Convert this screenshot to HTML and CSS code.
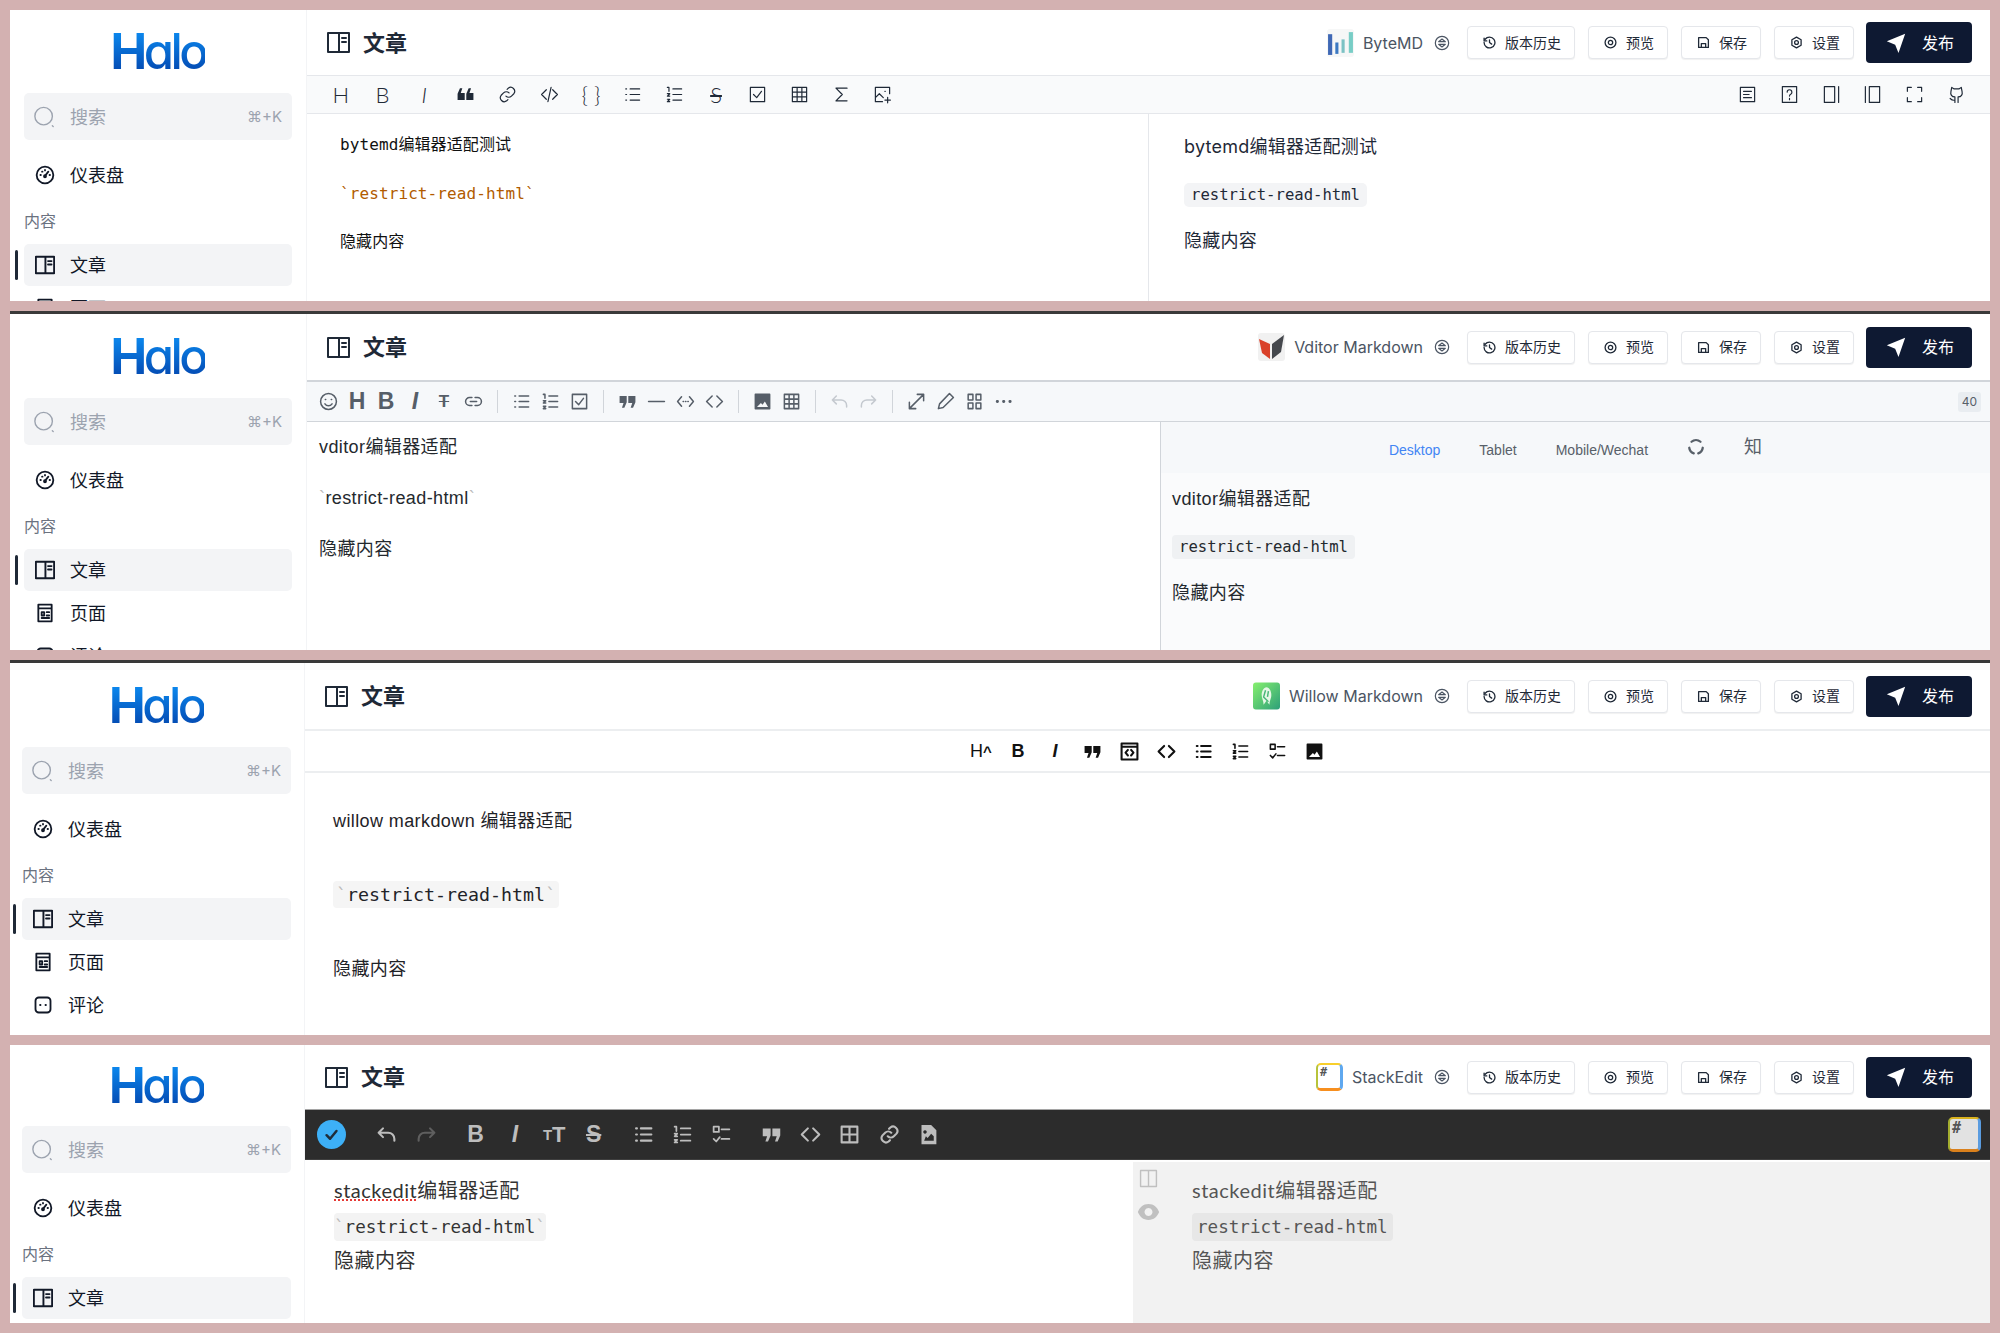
FILE: index.html
```html
<!DOCTYPE html>
<html lang="zh-CN">
<head>
    <meta charset="UTF-8">
    <title>Halo 编辑器适配</title>
    <link rel="stylesheet" href="styles.css">
</head>
<body>

<!-- icon sprite -->
<svg class="sprite" xmlns="http://www.w3.org/2000/svg">
    <symbol id="i-book" viewBox="0 0 23 21"><path d="M1 1h21v19H1zM12 1v19M15 6h4M15 10h4"/></symbol>
    <symbol id="i-dash" viewBox="0 0 24 24"><circle cx="12" cy="12" r="10"/><path d="M12 13l4-5M6.500 12h.5M8.500 8h.5M12 6v.5M17.500 12h.5"/><circle cx="12" cy="13.500" r="1.200"/></symbol>
    <symbol id="i-search" viewBox="0 0 24 24"><circle cx="11" cy="11" r="10"/><path d="M21 22l1 1"/></symbol>
    <symbol id="i-page" viewBox="0 0 24 24"><path d="M4 2h16v20H4zM4 6.500h16M8 11h3v4H8zM14 11h3M8 18h9M14 15h3"/></symbol>
    <symbol id="i-comment" viewBox="0 0 24 24"><path d="M7 3h10a4 4 0 0 1 4 4v10a4 4 0 0 1-4 4H7a4 4 0 0 1-4-4V7a4 4 0 0 1 4-4z"/><path d="M8.500 12h.5M15 12h.5"/></symbol>
    <symbol id="i-swap" viewBox="0 0 24 24"><circle cx="12" cy="12" r="10"/><path d="M7 10h10l-5-4zM7 14h10l-5 4z"/></symbol>
    <symbol id="i-history" viewBox="0 0 24 24"><path d="M4 6a10 10 0 1 1-2 6M2 4v5h5M12 7v5l4 3"/></symbol>
    <symbol id="i-eye" viewBox="0 0 24 24"><circle cx="12" cy="12" r="10"/><circle cx="12" cy="12" r="4"/></symbol>
    <symbol id="i-save" viewBox="0 0 24 24"><path d="M3 3h14l4 4v14H3zM8 21v-7h8v7"/></symbol>
    <symbol id="i-gear" viewBox="0 0 24 24"><path d="M12 2l8.500 5v10L12 22l-8.500-5V7z"/><circle cx="12" cy="12" r="3.500"/></symbol>
    <symbol id="i-send" viewBox="0 0 24 24"><path class="solid" d="M1 10L23 1 15 24l-4-10z"/></symbol>

    <symbol id="t-ul" viewBox="0 0 24 24"><path d="M9 5h12M9 12h12M9 19h12M3.500 5h1M3.500 12h1M3.500 19h1"/></symbol>
    <symbol id="t-ol" viewBox="0 0 24 24"><path d="M10 5h11M10 12h11M10 19h11M3 3h2v5M3 11h3l-3 3h3M3 18h3l-2 1.500 2 1.500H3"/></symbol>
    <symbol id="t-task" viewBox="0 0 24 24"><path d="M3 3h6v6H3zM12 6h9M3 17l3 3 4-5M12 17h9"/></symbol>
    <symbol id="t-check" viewBox="0 0 24 24"><path d="M3 3h18v18H3zM7 12l4 4 6-8"/></symbol>
    <symbol id="t-check-mark" viewBox="0 0 24 24"><path d="M5 13l5 5 9-11"/></symbol>
    <symbol id="t-quote" viewBox="0 0 24 24"><path class="solid" d="M2 5h9v8l-3 7H5l2-6H2zM13 5h9v8l-3 7h-3l2-6h-5z"/></symbol>
    <symbol id="t-code" viewBox="0 0 24 24"><path d="M9 5l-7 7 7 7M15 5l7 7-7 7"/></symbol>
    <symbol id="t-codeslash" viewBox="0 0 24 24"><path d="M8 6l-6 6 6 6M16 6l6 6-6 6M14 3l-4 18"/></symbol>
    <symbol id="t-inline" viewBox="0 0 24 24"><path d="M7 6l-5 6 5 6M17 6l5 6-5 6M9 12h.5M12 12h.5M15 12h.5"/></symbol>
    <symbol id="t-block" viewBox="0 0 24 24"><path d="M2 2h20v20H2zM2 6h20"/><path d="M10 10l-3 3.500 3 3.500M14 10l3 3.500-3 3.500"/></symbol>
    <symbol id="t-table" viewBox="0 0 24 24"><path d="M3 3h18v18H3zM3 9h18M3 15h18M9 3v18M15 3v18"/></symbol>
    <symbol id="t-table2" viewBox="0 0 24 24"><path d="M3 3h18v18H3zM3 12h18M12 3v18"/></symbol>
    <symbol id="t-link" viewBox="0 0 24 24"><path d="M10 14a5 5 0 0 0 7 0l3-3a5 5 0 0 0-7-7l-1.500 1.500M14 10a5 5 0 0 0-7 0l-3 3a5 5 0 0 0 7 7l1.500-1.500"/></symbol>
    <symbol id="t-linkh" viewBox="0 0 24 24"><path d="M10 7H7a5 5 0 0 0 0 10h3M14 7h3a5 5 0 0 1 0 10h-3M8 12h8"/></symbol>
    <symbol id="t-image" viewBox="0 0 24 24"><path class="solid" fill-rule="evenodd" d="M3 2h18a1 1 0 0 1 1 1v18a1 1 0 0 1-1 1H3a1 1 0 0 1-1-1V3a1 1 0 0 1 1-1zM5 19h14l-4-7-3 4-2-2z"/></symbol>
    <symbol id="t-imgadd" viewBox="0 0 24 24"><path d="M21 11V3H3v18h9M3 16l5-5 5 5M15 19h7M18.500 15.500v7M15 8h.5"/></symbol>
    <symbol id="t-imgfile" viewBox="0 0 24 24"><path class="solid" fill-rule="evenodd" d="M4 1h11l6 6v16H4zM7 19h11v-5l-3-3-4 5-2-2zM8 7a2 2 0 1 0 .01 0z"/></symbol>
    <symbol id="t-undo" viewBox="0 0 24 24"><path d="M8 5l-5 5 5 5M3 10h11a7 7 0 0 1 7 7v2"/></symbol>
    <symbol id="t-sigma" viewBox="0 0 24 24"><path d="M19 4H5l8 8-8 8h14"/></symbol>
    <symbol id="t-smile" viewBox="0 0 24 24"><circle cx="12" cy="12" r="10"/><path d="M8 9.500h.5M15.500 9.500h.5M7.500 15a5.500 5.500 0 0 0 9 0"/></symbol>
    <symbol id="t-hr" viewBox="0 0 24 24"><path d="M2 12h20"/></symbol>
    <symbol id="t-expand" viewBox="0 0 24 24"><path d="M3 21L21 3M13 3h8v8M3 13v8h8"/></symbol>
    <symbol id="t-pencil" viewBox="0 0 24 24"><path d="M3 21l1.500-6L17 2l5 5L9 19.500z"/></symbol>
    <symbol id="t-both" viewBox="0 0 24 24"><path d="M4 3h6v7H4zM14 3h6v7h-6zM4 14h6v7H4zM14 14h6v7h-6z"/></symbol>
    <symbol id="t-more" viewBox="0 0 24 24"><path d="M4 12h.5M12 12h.5M20 12h.5"/></symbol>
    <symbol id="t-toc" viewBox="0 0 24 24"><path d="M3 3h18v18H3zM7 8h10M7 12h7M7 16h10"/></symbol>
    <symbol id="t-help" viewBox="0 0 24 24"><path d="M3 2h18v20H3zM9 9a3 3 0 1 1 4.500 2.600c-1 .6-1.500 1.200-1.500 2.400M12 17v1.500"/></symbol>
    <symbol id="t-panelr" viewBox="0 0 24 24"><path d="M3 2h13v20H3zM21 2v20"/></symbol>
    <symbol id="t-panell" viewBox="0 0 24 24"><path d="M8 2h13v20H8zM3 2v20"/></symbol>
    <symbol id="t-full" viewBox="0 0 24 24"><path d="M3 8V3h5M16 3h5v5M21 16v5h-5M8 21H3v-5"/></symbol>
    <symbol id="t-github" viewBox="0 0 24 24"><path d="M6 3l3 2h6l3-2 1 5c1 4-1 7-5 7v7M6 3L5 8c-1 4 1 7 5 7v7M10 19c-3 1-4 0-6-2"/></symbol>
    <symbol id="t-columns" viewBox="0 0 24 24"><path d="M2 2h20v20H2zM12 2v20"/></symbol>
    <symbol id="t-eyeball" viewBox="0 0 24 18"><path class="solid" fill-rule="evenodd" d="M12 0c6 0 10 4 12 9-2 5-6 9-12 9S2 14 0 9c2-5 6-9 12-9zM12 4.500a4.500 4.500 0 1 0 .01 0z"/></symbol>
    <symbol id="t-reload" viewBox="0 0 24 24"><path d="M6 5a9 9 0 0 1 12 0M21 13a9 9 0 0 1-6 7.500M9 20.500A9 9 0 0 1 3 13"/></symbol>

    <symbol id="l-bytemd" viewBox="0 0 26 27"><rect width="26" height="27" rx="3" fill="#f6f7f7"/><rect x="1" y="5" width="4" height="20" fill="#3f68b5"/><rect x="8" y="13" width="3" height="11" fill="#3c79c2"/><rect x="14" y="10" width="3" height="13" fill="#7cc2c4"/><rect x="21" y="3" width="4" height="20" fill="#78cdc6"/></symbol>
    <symbol id="l-vditor" viewBox="0 0 27 28"><rect width="27" height="28" rx="3" fill="#f1f1f1"/><path d="M1 6l11 5v15L4 20z" fill="#d9412a"/><path d="M26 2L14 11v15l9-7z" fill="#45484d"/></symbol>
    <symbol id="l-willow" viewBox="0 0 28 28"><rect width="28" height="28" rx="3" fill="url(#willow-bg)"/><path d="M14 5c3 0 5 4 5 8s-2 6-2 10l-3-4-3 4c0-4-2-6-2-10s2-8 5-8z" fill="#e6f7e6"/><path d="M13 8l-2 7 5 5M16 9l-1 6" fill="none" stroke="#49b878" stroke-width="1.500"/></symbol>
    <defs><linearGradient id="willow-bg" x1="0" y1="0" x2="1" y2="1"><stop offset="0" stop-color="#86f06e"/><stop offset="1" stop-color="#2d9f79"/></linearGradient></defs>
</svg>

<main class="sheet">

    <!-- ByteMD -->
    <section class="panel panel-bytemd">
        <aside class="sidebar">
            <div class="logo"><span class="logo-text"><b>H</b>alo</span></div>
            <div class="search"><svg class="ic search-ic"><use href="#i-search"/></svg><span class="search-text">搜索</span><span class="search-key">⌘+K</span></div>
            <div class="nav-item nav-first"><svg class="ic"><use href="#i-dash"/></svg>仪表盘</div>
            <div class="nav-label">内容</div>
            <div class="nav-item active"><svg class="ic"><use href="#i-book"/></svg>文章</div>
            <div class="nav-item"><svg class="ic"><use href="#i-page"/></svg>页面</div>
            <div class="nav-item"><svg class="ic"><use href="#i-comment"/></svg>评论</div>
        </aside>
        <div class="main">
            <header class="head">
                <div class="title"><svg class="ic title-ic"><use href="#i-book"/></svg>文章</div>
                <div class="actions">
                    <div class="editor-name"><svg class="editor-logo"><use href="#l-bytemd"/></svg><span>ByteMD</span><svg class="ic swap"><use href="#i-swap"/></svg></div>
                    <button class="btn"><svg class="ic"><use href="#i-history"/></svg>版本历史</button>
                    <button class="btn"><svg class="ic"><use href="#i-eye"/></svg>预览</button>
                    <button class="btn"><svg class="ic"><use href="#i-save"/></svg>保存</button>
                    <button class="btn"><svg class="ic"><use href="#i-gear"/></svg>设置</button>
                    <button class="btn-publish"><svg class="ic"><use href="#i-send"/></svg>发布</button>
                </div>
            </header>
            <div class="tb tb-bytemd">
                <span class="tool letter">H</span>
                <span class="tool letter">B</span>
                <span class="tool letter ital">I</span>
                <span class="tool flip"><svg class="ic"><use href="#t-quote"/></svg></span>
                <span class="tool"><svg class="ic"><use href="#t-link"/></svg></span>
                <span class="tool"><svg class="ic"><use href="#t-codeslash"/></svg></span>
                <span class="tool letter">{ }</span>
                <span class="tool"><svg class="ic"><use href="#t-ul"/></svg></span>
                <span class="tool"><svg class="ic"><use href="#t-ol"/></svg></span>
                <span class="tool letter strike">S</span>
                <span class="tool"><svg class="ic"><use href="#t-check"/></svg></span>
                <span class="tool"><svg class="ic"><use href="#t-table"/></svg></span>
                <span class="tool"><svg class="ic"><use href="#t-sigma"/></svg></span>
                <span class="tool"><svg class="ic"><use href="#t-imgadd"/></svg></span>
                <span class="tb-right">
                    <span class="tool"><svg class="ic"><use href="#t-toc"/></svg></span>
                    <span class="tool"><svg class="ic"><use href="#t-help"/></svg></span>
                    <span class="tool"><svg class="ic"><use href="#t-panelr"/></svg></span>
                    <span class="tool"><svg class="ic"><use href="#t-panell"/></svg></span>
                    <span class="tool"><svg class="ic"><use href="#t-full"/></svg></span>
                    <span class="tool"><svg class="ic"><use href="#t-github"/></svg></span>
                </span>
            </div>
            <div class="split split-bytemd">
                <div class="src">
                    <p>bytemd编辑器适配测试</p>
                    <p class="orange">`restrict-read-html`</p>
                    <p>隐藏内容</p>
                </div>
                <div class="pre">
                    <p>bytemd编辑器适配测试</p>
                    <p><code>restrict-read-html</code></p>
                    <p>隐藏内容</p>
                </div>
            </div>
        </div>
    </section>

    <!-- Vditor -->
    <section class="panel panel-vditor has-bar">
        <aside class="sidebar">
            <div class="logo"><span class="logo-text"><b>H</b>alo</span></div>
            <div class="search"><svg class="ic search-ic"><use href="#i-search"/></svg><span class="search-text">搜索</span><span class="search-key">⌘+K</span></div>
            <div class="nav-item nav-first"><svg class="ic"><use href="#i-dash"/></svg>仪表盘</div>
            <div class="nav-label">内容</div>
            <div class="nav-item active"><svg class="ic"><use href="#i-book"/></svg>文章</div>
            <div class="nav-item"><svg class="ic"><use href="#i-page"/></svg>页面</div>
            <div class="nav-item"><svg class="ic"><use href="#i-comment"/></svg>评论</div>
        </aside>
        <div class="main">
            <header class="head">
                <div class="title"><svg class="ic title-ic"><use href="#i-book"/></svg>文章</div>
                <div class="actions">
                    <div class="editor-name"><svg class="editor-logo"><use href="#l-vditor"/></svg><span>Vditor Markdown</span><svg class="ic swap"><use href="#i-swap"/></svg></div>
                    <button class="btn"><svg class="ic"><use href="#i-history"/></svg>版本历史</button>
                    <button class="btn"><svg class="ic"><use href="#i-eye"/></svg>预览</button>
                    <button class="btn"><svg class="ic"><use href="#i-save"/></svg>保存</button>
                    <button class="btn"><svg class="ic"><use href="#i-gear"/></svg>设置</button>
                    <button class="btn-publish"><svg class="ic"><use href="#i-send"/></svg>发布</button>
                </div>
            </header>
            <div class="tb tb-vditor">
                <span class="tool"><svg class="ic"><use href="#t-smile"/></svg></span>
                <span class="tool letter">H</span>
                <span class="tool letter">B</span>
                <span class="tool letter ital">I</span>
                <span class="tool letter strike">T</span>
                <span class="tool"><svg class="ic"><use href="#t-linkh"/></svg></span>
                <i class="sep"></i>
                <span class="tool"><svg class="ic"><use href="#t-ul"/></svg></span>
                <span class="tool"><svg class="ic"><use href="#t-ol"/></svg></span>
                <span class="tool"><svg class="ic"><use href="#t-check"/></svg></span>
                <i class="sep"></i>
                <span class="tool"><svg class="ic"><use href="#t-quote"/></svg></span>
                <span class="tool"><svg class="ic"><use href="#t-hr"/></svg></span>
                <span class="tool"><svg class="ic"><use href="#t-inline"/></svg></span>
                <span class="tool"><svg class="ic"><use href="#t-code"/></svg></span>
                <i class="sep"></i>
                <span class="tool"><svg class="ic"><use href="#t-image"/></svg></span>
                <span class="tool"><svg class="ic"><use href="#t-table"/></svg></span>
                <i class="sep"></i>
                <span class="tool off"><svg class="ic"><use href="#t-undo"/></svg></span>
                <span class="tool off mirror"><svg class="ic"><use href="#t-undo"/></svg></span>
                <i class="sep"></i>
                <span class="tool"><svg class="ic"><use href="#t-expand"/></svg></span>
                <span class="tool"><svg class="ic"><use href="#t-pencil"/></svg></span>
                <span class="tool"><svg class="ic"><use href="#t-both"/></svg></span>
                <span class="tool"><svg class="ic ic-more"><use href="#t-more"/></svg></span>
                <span class="counter">40</span>
            </div>
            <div class="split split-vditor">
                <div class="src">
                    <p>vditor编辑器适配</p>
                    <p><em>`</em>restrict-read-html<em>`</em></p>
                    <p>隐藏内容</p>
                </div>
                <div class="pre">
                    <div class="tabs">
                        <span class="tab tab-on">Desktop</span>
                        <span class="tab">Tablet</span>
                        <span class="tab">Mobile/Wechat</span>
                        <svg class="ic tab-ic"><use href="#t-reload"/></svg>
                        <span class="tab-zhi">知</span>
                    </div>
                    <div class="pre-body">
                        <p>vditor编辑器适配</p>
                        <p><code>restrict-read-html</code></p>
                        <p>隐藏内容</p>
                    </div>
                </div>
            </div>
        </div>
    </section>

    <!-- Willow -->
    <section class="panel panel-willow has-bar narrow">
        <aside class="sidebar">
            <div class="logo"><span class="logo-text"><b>H</b>alo</span></div>
            <div class="search"><svg class="ic search-ic"><use href="#i-search"/></svg><span class="search-text">搜索</span><span class="search-key">⌘+K</span></div>
            <div class="nav-item nav-first"><svg class="ic"><use href="#i-dash"/></svg>仪表盘</div>
            <div class="nav-label">内容</div>
            <div class="nav-item active"><svg class="ic"><use href="#i-book"/></svg>文章</div>
            <div class="nav-item"><svg class="ic"><use href="#i-page"/></svg>页面</div>
            <div class="nav-item"><svg class="ic"><use href="#i-comment"/></svg>评论</div>
        </aside>
        <div class="main">
            <header class="head">
                <div class="title"><svg class="ic title-ic"><use href="#i-book"/></svg>文章</div>
                <div class="actions">
                    <div class="editor-name"><svg class="editor-logo"><use href="#l-willow"/></svg><span>Willow Markdown</span><svg class="ic swap"><use href="#i-swap"/></svg></div>
                    <button class="btn"><svg class="ic"><use href="#i-history"/></svg>版本历史</button>
                    <button class="btn"><svg class="ic"><use href="#i-eye"/></svg>预览</button>
                    <button class="btn"><svg class="ic"><use href="#i-save"/></svg>保存</button>
                    <button class="btn"><svg class="ic"><use href="#i-gear"/></svg>设置</button>
                    <button class="btn-publish"><svg class="ic"><use href="#i-send"/></svg>发布</button>
                </div>
            </header>
            <div class="tb tb-willow">
                <span class="tool letter heading">H<b>^</b></span>
                <span class="tool letter">B</span>
                <span class="tool letter ital">I</span>
                <span class="tool"><svg class="ic"><use href="#t-quote"/></svg></span>
                <span class="tool"><svg class="ic"><use href="#t-block"/></svg></span>
                <span class="tool"><svg class="ic"><use href="#t-code"/></svg></span>
                <span class="tool"><svg class="ic"><use href="#t-ul"/></svg></span>
                <span class="tool"><svg class="ic thin"><use href="#t-ol"/></svg></span>
                <span class="tool"><svg class="ic thin"><use href="#t-task"/></svg></span>
                <span class="tool"><svg class="ic"><use href="#t-image"/></svg></span>
            </div>
            <div class="doc-willow">
                <p>willow markdown 编辑器适配</p>
                <p><code><em>`</em>restrict-read-html<em>`</em></code></p>
                <p>隐藏内容</p>
            </div>
        </div>
    </section>

    <!-- StackEdit -->
    <section class="panel panel-stackedit narrow">
        <aside class="sidebar">
            <div class="logo"><span class="logo-text"><b>H</b>alo</span></div>
            <div class="search"><svg class="ic search-ic"><use href="#i-search"/></svg><span class="search-text">搜索</span><span class="search-key">⌘+K</span></div>
            <div class="nav-item nav-first"><svg class="ic"><use href="#i-dash"/></svg>仪表盘</div>
            <div class="nav-label">内容</div>
            <div class="nav-item active"><svg class="ic"><use href="#i-book"/></svg>文章</div>
        </aside>
        <div class="main">
            <header class="head">
                <div class="title"><svg class="ic title-ic"><use href="#i-book"/></svg>文章</div>
                <div class="actions">
                    <div class="editor-name"><span class="se-logo">#</span><span>StackEdit</span><svg class="ic swap"><use href="#i-swap"/></svg></div>
                    <button class="btn"><svg class="ic"><use href="#i-history"/></svg>版本历史</button>
                    <button class="btn"><svg class="ic"><use href="#i-eye"/></svg>预览</button>
                    <button class="btn"><svg class="ic"><use href="#i-save"/></svg>保存</button>
                    <button class="btn"><svg class="ic"><use href="#i-gear"/></svg>设置</button>
                    <button class="btn-publish"><svg class="ic"><use href="#i-send"/></svg>发布</button>
                </div>
            </header>
            <div class="tb tb-stackedit">
                <span class="se-check"><svg class="ic"><use href="#t-check-mark"/></svg></span>
                <span class="tool"><svg class="ic"><use href="#t-undo"/></svg></span>
                <span class="tool off mirror"><svg class="ic"><use href="#t-undo"/></svg></span>
                <span class="tool letter group">B</span>
                <span class="tool letter ital">I</span>
                <span class="tool letter size"><small>T</small>T</span>
                <span class="tool letter strike">S</span>
                <span class="tool group"><svg class="ic"><use href="#t-ul"/></svg></span>
                <span class="tool"><svg class="ic thin"><use href="#t-ol"/></svg></span>
                <span class="tool"><svg class="ic thin"><use href="#t-task"/></svg></span>
                <span class="tool group"><svg class="ic"><use href="#t-quote"/></svg></span>
                <span class="tool"><svg class="ic"><use href="#t-code"/></svg></span>
                <span class="tool"><svg class="ic"><use href="#t-table2"/></svg></span>
                <span class="tool"><svg class="ic"><use href="#t-link"/></svg></span>
                <span class="tool"><svg class="ic"><use href="#t-imgfile"/></svg></span>
                <span class="se-logo se-logo-dark">#</span>
            </div>
            <div class="split split-stackedit">
                <div class="src">
                    <p><span class="typo">stackedit</span>编辑器适配</p>
                    <p><code><em>`</em>restrict-read-html<em>`</em></code></p>
                    <p>隐藏内容</p>
                </div>
                <div class="pre">
                    <div class="se-rail">
                        <svg class="ic"><use href="#t-columns"/></svg>
                        <svg class="ic ic-eye"><use href="#t-eyeball"/></svg>
                    </div>
                    <div class="pre-body">
                        <p>stackedit编辑器适配</p>
                        <p><code>restrict-read-html</code></p>
                        <p>隐藏内容</p>
                    </div>
                </div>
            </div>
        </div>
    </section>

</main>
</body>
</html>
```

FILE: styles.css
```css
*
{
    margin: 0;
    padding: 0;
    box-sizing: border-box;
}
body
{
    background-color: #d3b1b1;
    font-family: Inter, "Noto Sans CJK SC", sans-serif;
    color: #111827;
}
.sprite
{
    display: block;
    width: 0;
    height: 0;
    overflow: hidden;
}
.ic
{
    fill: none;
    stroke: currentColor;
    stroke-width: 2;
    stroke-linecap: round;
    stroke-linejoin: round;
    width: 18px;
    height: 18px;
    flex: none;
}
.solid
{
    fill: currentColor;
    stroke: none;
}

.sheet
{
    padding: 10px;
    display: flex;
    flex-direction: column;
    gap: 10px;
}
.panel
{
    --logo-h: 83px;
    --head-h: 65px;
    display: grid;
    grid-template-columns: 297px 1fr;
    overflow: hidden;
    background-color: #fff;
}
.panel-bytemd { height: 291px; }
.panel-vditor { height: 339px; }
.panel-willow { height: 375px; }
.panel-stackedit { height: 278px; --logo-h: 81px; --head-h: 64px; }
.has-bar
{
    border-top: 3px solid #3a3a3a;
    --logo-h: 84px;
    --head-h: 66px;
}
.narrow
{
    grid-template-columns: 295px 1fr;
}

/* sidebar */
.sidebar
{
    padding: 0 14px;
    border-right: 1px solid #f3f4f6;
    overflow: hidden;
}
.narrow .sidebar
{
    padding: 0 13px 0 12px;
}
.logo
{
    height: var(--logo-h);
    display: flex;
    align-items: center;
    justify-content: center;
}
.logo-text
{
    font-size: 49px;
    line-height: 1;
    font-weight: 500;
    letter-spacing: -3.500px;
    font-feature-settings: "cv11";
    background: linear-gradient(#0c90f6, #0343ab);
    -webkit-background-clip: text;
    background-clip: text;
    color: transparent;
}
.logo-text b
{
    font-weight: 700;
}
.search
{
    height: 47px;
    border-radius: 5px;
    background-color: #f3f4f6;
    display: flex;
    align-items: center;
    padding: 0 10px;
    color: #9ca3af;
}
.search-ic
{
    width: 21px;
    height: 24px;
    stroke-width: 1.600;
}
.search-text
{
    font-family: "Noto Sans CJK SC", sans-serif;
    font-size: 18px;
    line-height: 1;
    margin: -2px 0 0 15px;
}
.search-key
{
    margin-left: auto;
    font-size: 15px;
}
.nav-item
{
    position: relative;
    height: 42px;
    margin-bottom: 1px;
    padding: 0 11px 2px;
    border-radius: 5px;
    display: flex;
    align-items: center;
    gap: 15px;
    font-family: "Noto Sans CJK SC", sans-serif;
    font-size: 18px;
    line-height: 1;
    color: #111827;
}
.nav-item .ic
{
    width: 20px;
    height: 20px;
    margin-top: 2px;
    stroke-width: 2.200;
}
.nav-first
{
    margin-top: 14px;
}
.nav-label
{
    height: 24px;
    margin: 12px 0;
    line-height: 24px;
    font-family: "Noto Sans CJK SC", sans-serif;
    font-size: 16px;
    color: #6b7280;
}
.active
{
    background-color: #f3f4f6;
}
.active::before
{
    content: "";
    position: absolute;
    left: -9px;
    top: 6px;
    bottom: 6px;
    width: 3px;
    border-radius: 2px;
    background-color: #1f2937;
}

/* header */
.main
{
    display: flex;
    flex-direction: column;
    min-width: 0;
}
.head
{
    height: var(--head-h);
    flex: none;
    display: flex;
    align-items: center;
    justify-content: space-between;
    padding: 0 18px 0 20px;
}
.title
{
    display: flex;
    align-items: center;
    gap: 13px;
    padding-bottom: 4px;
    font-family: "Noto Sans CJK SC", sans-serif;
    font-size: 22px;
    line-height: 1;
    font-weight: 700;
    color: #1f2937;
}
.title-ic
{
    width: 23px;
    height: 21px;
    margin-top: 4px;
}
.actions
{
    display: flex;
    align-items: center;
    gap: 13px;
}
.editor-name
{
    display: flex;
    align-items: center;
    gap: 9px;
    margin-right: 4px;
    font-size: 16px;
    color: #4b5563;
}
.editor-logo
{
    width: 27px;
    height: 28px;
}
.swap
{
    width: 16px;
    height: 16px;
    margin-left: 2px;
    stroke-width: 1.800;
}
.btn
{
    height: 33px;
    padding: 0 13px 2px 15px;
    border: 1px solid #e5e7eb;
    border-radius: 4px;
    background-color: #fff;
    box-shadow: 0 1px 1px rgba(0, 0, 0, 0.06);
    display: flex;
    align-items: center;
    gap: 9px;
    font-family: "Noto Sans CJK SC", sans-serif;
    font-size: 14px;
    line-height: 1;
    color: #1f2937;
}
.btn .ic
{
    width: 13px;
    height: 13px;
    margin-top: 2px;
    stroke-width: 2.400;
}
.btn-publish
{
    width: 106px;
    height: 41px;
    margin-left: -1px;
    padding: 0 0 2px 20px;
    border: 0;
    border-radius: 4px;
    background-color: #0e1932;
    display: flex;
    align-items: center;
    gap: 16px;
    font-family: "Noto Sans CJK SC", sans-serif;
    font-size: 16px;
    line-height: 1;
    color: #fff;
}
.btn-publish .ic
{
    width: 20px;
    height: 20px;
    margin-top: 2px;
}

/* toolbars */
.tb
{
    display: flex;
    align-items: center;
    flex: none;
}
.tool
{
    display: flex;
    align-items: center;
    justify-content: center;
    flex: none;
}
.letter
{
    font-family: "Liberation Sans", sans-serif;
}
.ital
{
    font-style: italic;
}
.strike
{
    text-decoration: line-through;
}
.mirror .ic
{
    transform: scaleX(-1);
}
.flip .ic
{
    transform: rotate(180deg);
}

.tb-bytemd
{
    height: 39px;
    padding: 0 13px;
    background-color: #f9fafb;
    border-top: 1px solid #e5e7eb;
    border-bottom: 1px solid #e5e7eb;
    color: #1f2937;
}
.tb-bytemd .tool
{
    width: 41.700px;
}
.tb-bytemd .ic
{
    width: 19px;
    height: 19px;
    stroke-width: 1.500;
}
.tb-bytemd .letter
{
    font-family: Lato, sans-serif;
    font-weight: 300;
    font-size: 22px;
}
.tb-right
{
    margin-left: auto;
    display: flex;
}

.tb-vditor
{
    height: 42px;
    padding-left: 6.500px;
    background-color: #f6f8fa;
    border-top: 2px solid #d1d5da;
    border-bottom: 1px solid #d1d5da;
    color: #565e68;
}
.tb-vditor .tool
{
    width: 29px;
    font-size: 23px;
    font-weight: 700;
}
.tb-vditor .ic
{
    width: 19px;
    height: 19px;
    stroke-width: 1.900;
}
.tb-vditor .ic-more
{
    stroke-width: 3.500;
}
.tb-vditor .off
{
    color: #c4c9cf;
}
.tb-vditor .strike
{
    font-size: 17px;
}
.sep
{
    width: 1px;
    height: 23px;
    margin: 0 9px;
    background-color: #d1d5da;
}
.counter
{
    margin: 0 9px 0 auto;
    width: 23px;
    height: 20px;
    border-radius: 3px;
    background-color: #e9edf1;
    font-size: 12px;
    line-height: 20px;
    text-align: center;
    color: #586069;
}

.tb-willow
{
    height: 44px;
    justify-content: center;
    border-top: 2px solid #eceef0;
    border-bottom: 2px solid #eceef0;
    color: #111;
}
.tb-willow .tool
{
    width: 37px;
    font-size: 18px;
    font-weight: 700;
}
.tb-willow .ic
{
    width: 19px;
    height: 19px;
    stroke-width: 2.600;
}
.tb-willow .ic.thin
{
    stroke-width: 2;
}
.tb-willow .heading
{
    font-weight: 400;
}
.heading b
{
    font-size: 15px;
}

.tb-stackedit
{
    height: 51px;
    padding: 0 9px 0 12px;
    background-color: #2c2c2c;
    border-top: 1px solid #a5a5a5;
    border-bottom: 1px solid #3f3f3f;
    color: #bdbdbd;
}
.tb-stackedit .tool
{
    width: 39.400px;
    font-size: 23px;
    font-weight: 700;
}
.tb-stackedit .ic
{
    width: 21px;
    height: 21px;
    stroke-width: 2.400;
}
.tb-stackedit .off
{
    color: #5f5f5f;
}
.tb-stackedit .group
{
    margin-left: 10px;
}
.tb-stackedit .size
{
    font-size: 22px;
}
.tb-stackedit .size small
{
    font-size: 15px;
}
.tb-stackedit .ic.thin
{
    stroke-width: 2;
}
.se-check
{
    width: 29px;
    height: 29px;
    margin-right: 21px;
    border-radius: 50%;
    background-color: #3db0f7;
    color: #1f2d3a;
    display: flex;
    align-items: center;
    justify-content: center;
}
.tb-stackedit .se-check .ic
{
    width: 17px;
    height: 17px;
    stroke-width: 3.500;
}
.se-logo
{
    width: 27px;
    height: 28px;
    border-radius: 5px;
    border-style: solid;
    border-width: 2px 3px 3px 2px;
    border-color: #f8cf2c #5fa8ef #f78f1f #b7c33a;
    background-color: #fff;
    padding-left: 2px;
    font-family: "DejaVu Sans Mono", monospace;
    font-size: 12px;
    font-weight: 700;
    line-height: 14px;
    color: #555;
}
.se-logo-dark
{
    margin-left: auto;
    width: 33px;
    height: 35px;
    background-color: #e2e2e2;
    font-size: 15px;
    line-height: 18px;
    border-color: #d9b21e #5a9ce0 #d9801c #a4ae2f;
}

/* editor bodies */
.split
{
    flex: 1;
    display: grid;
    min-height: 0;
}
code
{
    font-family: "DejaVu Sans Mono", monospace;
}
em
{
    font-style: normal;
    color: #bbb;
}
.split-bytemd
{
    grid-template-columns: 842px 1fr;
}
.split-bytemd .src
{
    padding: 7px 0 0 33px;
    border-right: 1px solid #e5e7eb;
    font-family: "DejaVu Sans Mono", "Noto Sans CJK SC", monospace;
    font-size: 16px;
    letter-spacing: 0.100px;
    line-height: 48.500px;
    color: #111;
}
.orange
{
    color: #b15b00;
}
.split-bytemd .pre
{
    padding: 19px 0 0 35px;
    font-size: 18px;
    line-height: 28px;
    letter-spacing: 0.250px;
    color: #1f2937;
}
.split-bytemd .pre p
{
    margin-bottom: 19px;
}
.split-bytemd code
{
    display: inline-block;
    padding: 0 7px;
    border-radius: 5px;
    background-color: #f3f4f6;
    font-size: 15.600px;
    letter-spacing: 0;
    line-height: 24px;
}

.split-vditor
{
    grid-template-columns: 853px 1fr;
    font-family: "Liberation Sans", "Noto Sans CJK SC", sans-serif;
    color: #24292e;
}
.split-vditor .src
{
    padding-left: 12px;
    font-size: 18px;
    letter-spacing: 0.400px;
    line-height: 51px;
}
.split-vditor .pre
{
    border-left: 1px solid #d1d5da;
    background-color: #fafbfc;
}
.tabs
{
    height: 51px;
    background-color: #f6f8fa;
    display: flex;
    align-items: center;
    justify-content: center;
    gap: 39px;
    font-size: 14px;
    color: #586069;
}
.tab
{
    padding-top: 4px;
}
.tab-on
{
    color: #4285f4;
}
.tab-ic
{
    width: 18px;
    height: 18px;
    margin-top: -2px;
    stroke-width: 3;
}
.tab-zhi
{
    font-size: 18px;
    margin-top: -6px;
}
.split-vditor .pre-body
{
    padding: 12px 0 0 11px;
    font-size: 18px;
    letter-spacing: 0.400px;
    line-height: 28px;
}
.split-vditor .pre-body p
{
    margin-bottom: 19px;
}
.split-vditor code
{
    display: inline-block;
    padding: 0 7px;
    border-radius: 4px;
    background-color: #eff1f3;
    font-size: 15.600px;
    letter-spacing: 0;
    line-height: 24px;
}

.doc-willow
{
    padding: 11px 0 0 28px;
    font-family: "Liberation Sans", "Noto Sans CJK SC", sans-serif;
    font-size: 18px;
    letter-spacing: 0.400px;
    line-height: 74px;
    color: #1f2328;
}
.doc-willow code
{
    display: inline-block;
    padding: 0 3px;
    border-radius: 4px;
    background-color: #f5f5f5;
    font-size: 18.300px;
    letter-spacing: 0;
    line-height: 27px;
}

.split-stackedit
{
    grid-template-columns: 828px 1fr;
    font-family: Lato, "Noto Sans CJK SC", sans-serif;
    font-size: 20px;
    letter-spacing: 0.500px;
    line-height: 35px;
}
.split-stackedit .src
{
    padding: 13px 0 0 29px;
    color: #333;
}
.typo
{
    text-decoration: underline dotted #e53935;
}
.split-stackedit .pre
{
    margin-top: 2px;
    background-color: #f2f2f2;
    display: flex;
    color: #555;
}
.se-rail
{
    width: 30px;
    padding-top: 7px;
    display: flex;
    flex-direction: column;
    align-items: center;
    gap: 16px;
    color: #c0c0c0;
}
.se-rail .ic
{
    width: 19px;
    height: 19px;
    stroke-width: 1.800;
}
.se-rail .ic-eye
{
    width: 23px;
    height: 16px;
}
.split-stackedit .pre-body
{
    padding: 11px 0 0 29px;
}
.split-stackedit code
{
    display: inline-block;
    border-radius: 4px;
    background-color: #f3f3f3;
    font-size: 17.600px;
    letter-spacing: 0;
    line-height: 28px;
}
.split-stackedit .pre code
{
    padding: 0 5px;
    background-color: #e7e7e7;
}
```
